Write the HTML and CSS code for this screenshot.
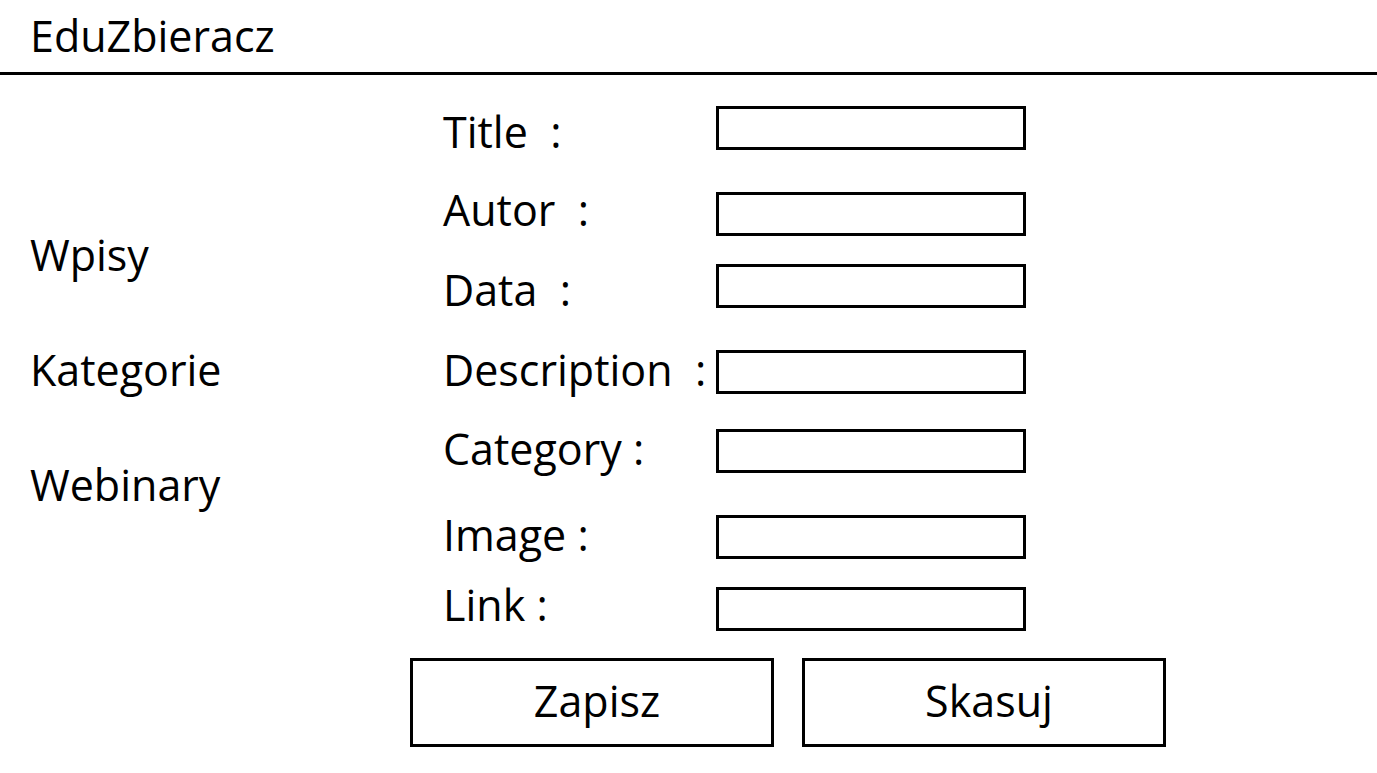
FILE: index.html
```html
<!DOCTYPE html>
<html lang="pl">
<head>
    <meta charset="UTF-8">
    <meta name="viewport" content="width=device-width, initial-scale=1.0">
    <title>EduZbieracz</title>
    <link rel="stylesheet" href="styles.css">
</head>
<body>

<header class="topbar">EduZbieracz</header>

<div class="main">
    <!-- Sidebar -->
    <nav class="sidebar">
        <a class="nav-item">Wpisy</a>
        <a class="nav-item">Kategorie</a>
        <a class="nav-item">Webinary</a>
    </nav>

    <!-- Form -->
    <form class="entry-form" onsubmit="return false">
        <div class="row">
            <label class="label low">Title&nbsp; :</label>
            <input class="field" type="text">
        </div>
        <div class="row gap-wide">
            <label class="label high">Autor&nbsp; :</label>
            <input class="field" type="text">
        </div>
        <div class="row gap-tight">
            <label class="label low">Data&nbsp; :</label>
            <input class="field" type="text">
        </div>
        <div class="row gap-wide">
            <label class="label">Description&nbsp; :</label>
            <input class="field" type="text">
        </div>
        <div class="row gap-mid">
            <label class="label">Category :</label>
            <input class="field" type="text">
        </div>
        <div class="row gap-wide">
            <label class="label">Image :</label>
            <input class="field" type="text">
        </div>
        <div class="row gap-tight">
            <label class="label high">Link :</label>
            <input class="field" type="text">
        </div>
        <div class="actions">
            <button class="btn" type="submit">Zapisz</button>
            <button class="btn" type="reset">Skasuj</button>
        </div>
    </form>
</div>

</body>
</html>
```

FILE: styles.css
```css
* { margin: 0; padding: 0; box-sizing: border-box; }
body { font-family: "Open Sans", "Noto Sans", sans-serif; font-size: 43px; line-height: 44px; color: #000; background: #fff; }

.topbar { height: 75px; padding: 14px 30px 0; border-bottom: 3px solid #000; }

.main { display: flex; }

.sidebar { width: 410px; padding: 158px 0 0 30px; display: flex; flex-direction: column; gap: 71px; }
.nav-item { display: block; color: #000; text-decoration: none; }

.entry-form { padding-top: 31px; display: flex; flex-direction: column; }
.row { display: flex; align-items: center; height: 44px; padding-left: 33px; }
.row.gap-wide { margin-top: 42px; }
.row.gap-mid { margin-top: 35px; }
.row.gap-tight { margin-top: 28px; }
.label { width: 273px; white-space: nowrap; position: relative; top: -2px; }
.label.low { top: 4px; }
.label.high { top: -4px; }
.field { width: 310px; height: 44px; border: 3px solid #000; background: #fff; font: inherit; font-size: 20px; padding: 0 8px; outline: none; }

.actions { display: flex; gap: 28px; margin-top: 27px; }
.btn { width: 364px; height: 89px; padding: 0 0 4px 10px; border: 3px solid #000; background: #fff; color: #000; font: inherit; font-size: 43px; line-height: 44px; cursor: pointer; }
```
